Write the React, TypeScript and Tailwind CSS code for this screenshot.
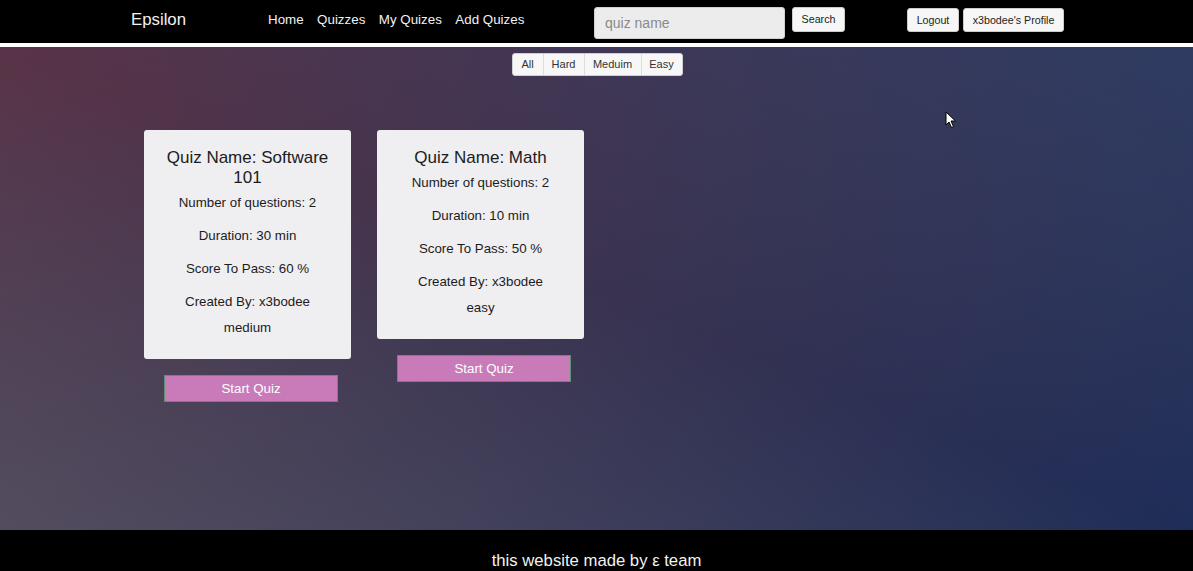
const quizzes = [
  {
    name: "Software 101",
    questions: 2,
    duration: 30,
    pass: 60,
    author: "x3bodee",
    level: "medium",
  },
  {
    name: "Math",
    questions: 2,
    duration: 10,
    pass: 50,
    author: "x3bodee",
    level: "easy",
  },
];

function QuizCard({ quiz }: { quiz: (typeof quizzes)[number] }) {
  return (
    <div className="flex w-[207px] flex-col">
      <div className="rounded-[3px] bg-[#efeef1] px-[15px] pb-[21px] pt-[18px] text-center text-[#1c1c1c]">
        <h4 className="mb-[5px] text-[17px] leading-[20px]">
          Quiz Name: {quiz.name}
        </h4>
        <p className="mb-[13px] text-[13.3px] leading-[20px]">
          Number of questions: {quiz.questions}
        </p>
        <p className="mb-[13px] text-[13.3px] leading-[20px]">
          Duration: {quiz.duration} min
        </p>
        <p className="mb-[13px] text-[13.3px] leading-[20px]">
          Score To Pass: {quiz.pass} %
        </p>
        <p className="text-[13.3px] leading-[20px]">
          Created By: {quiz.author}
        </p>
        <p className="mt-[6px] text-[13.3px] leading-[20px]">{quiz.level}</p>
      </div>
      <div className="mt-[16px] flex justify-center pl-[7px]">
        <button className="h-[27px] w-[174px] border border-[#5f8f74] bg-[#c97bb9] text-[13.3px] text-white">
          Start Quiz
        </button>
      </div>
    </div>
  );
}

export default function App() {
  return (
    <div className="flex h-[571px] flex-col overflow-hidden font-['Liberation_Sans',Arial,sans-serif]">
      <nav className="flex h-[43px] shrink-0 items-center bg-black pl-[131px] text-[#f2f2f2]">
        <div className="w-[137px] pb-[2px] text-[16.8px] leading-none">Epsilon</div>
        <div className="flex w-[326px] gap-[13.5px] pb-[2px] text-[13.35px]">
          <a>Home</a>
          <a>Quizzes</a>
          <a>My Quizes</a>
          <a>Add Quizes</a>
        </div>
        <div className="flex items-start gap-[7px] self-start pt-[7px]">
          <input
            placeholder="quiz name"
            className="h-[32px] w-[191px] rounded-[3px] border border-[#d0d0d0] bg-[#ececec] px-[10px] text-[14px] text-[#333] placeholder:text-[#8a8a8a]"
          />
          <button className="h-[25px] w-[53px] rounded-[3px] border border-[#ccc] bg-[#f6f6f6] text-[10.7px] text-[#222]">
            Search
          </button>
        </div>
        <div className="ml-[62px] flex gap-[4px] self-start pt-[8px]">
          <button className="h-[24px] w-[52px] rounded-[3px] border border-[#ccc] bg-[#f6f6f6] text-[10.7px] text-[#222]">
            Logout
          </button>
          <button className="h-[24px] w-[101px] rounded-[3px] border border-[#ccc] bg-[#f6f6f6] text-[10.7px] text-[#222]">
            x3bodee's Profile
          </button>
        </div>
      </nav>
      <div className="h-[4px] shrink-0 bg-white" />

      <main className="relative flex h-[483px] shrink-0 flex-col bg-[linear-gradient(to_top_right,rgba(100,93,104,0.6),transparent_50%,rgba(40,65,110,0.6)),linear-gradient(to_bottom_right,#5a3347,#3a3350_50%,#1e2d58)]">
        <div className="mt-[6px] flex justify-center pl-[1px]">
          <div className="flex h-[23px] overflow-hidden rounded-[3px] border border-[#cfcfcf] bg-[#f7f7f7] text-[11px] text-[#333]">
            <button className="w-[31px] border-r border-[#dcdcdc]">All</button>
            <button className="w-[41px] border-r border-[#dcdcdc]">Hard</button>
            <button className="w-[57px] border-r border-[#dcdcdc]">Meduim</button>
            <button className="w-[40px]">Easy</button>
          </div>
        </div>

        <div className="mt-[54px] flex items-start gap-[26px] pl-[144px]">
          {quizzes.map((q) => (
            <QuizCard key={q.name} quiz={q} />
          ))}
        </div>

        <svg
          className="absolute left-[945px] top-[64px]"
          width="12"
          height="18"
          viewBox="0 0 12 18"
        >
          <path
            d="M1 1 L1 14 L4 11 L6.5 16.5 L8.5 15.5 L6 10 L10.5 10 Z"
            fill="white"
            stroke="black"
            strokeWidth="1"
            strokeLinejoin="round"
          />
        </svg>
      </main>

      <footer className="flex flex-1 justify-center bg-black pt-[21px] text-[16.7px] leading-[19px] text-[#f2f2f2]">
        this website made by ε team
      </footer>
    </div>
  );
}
